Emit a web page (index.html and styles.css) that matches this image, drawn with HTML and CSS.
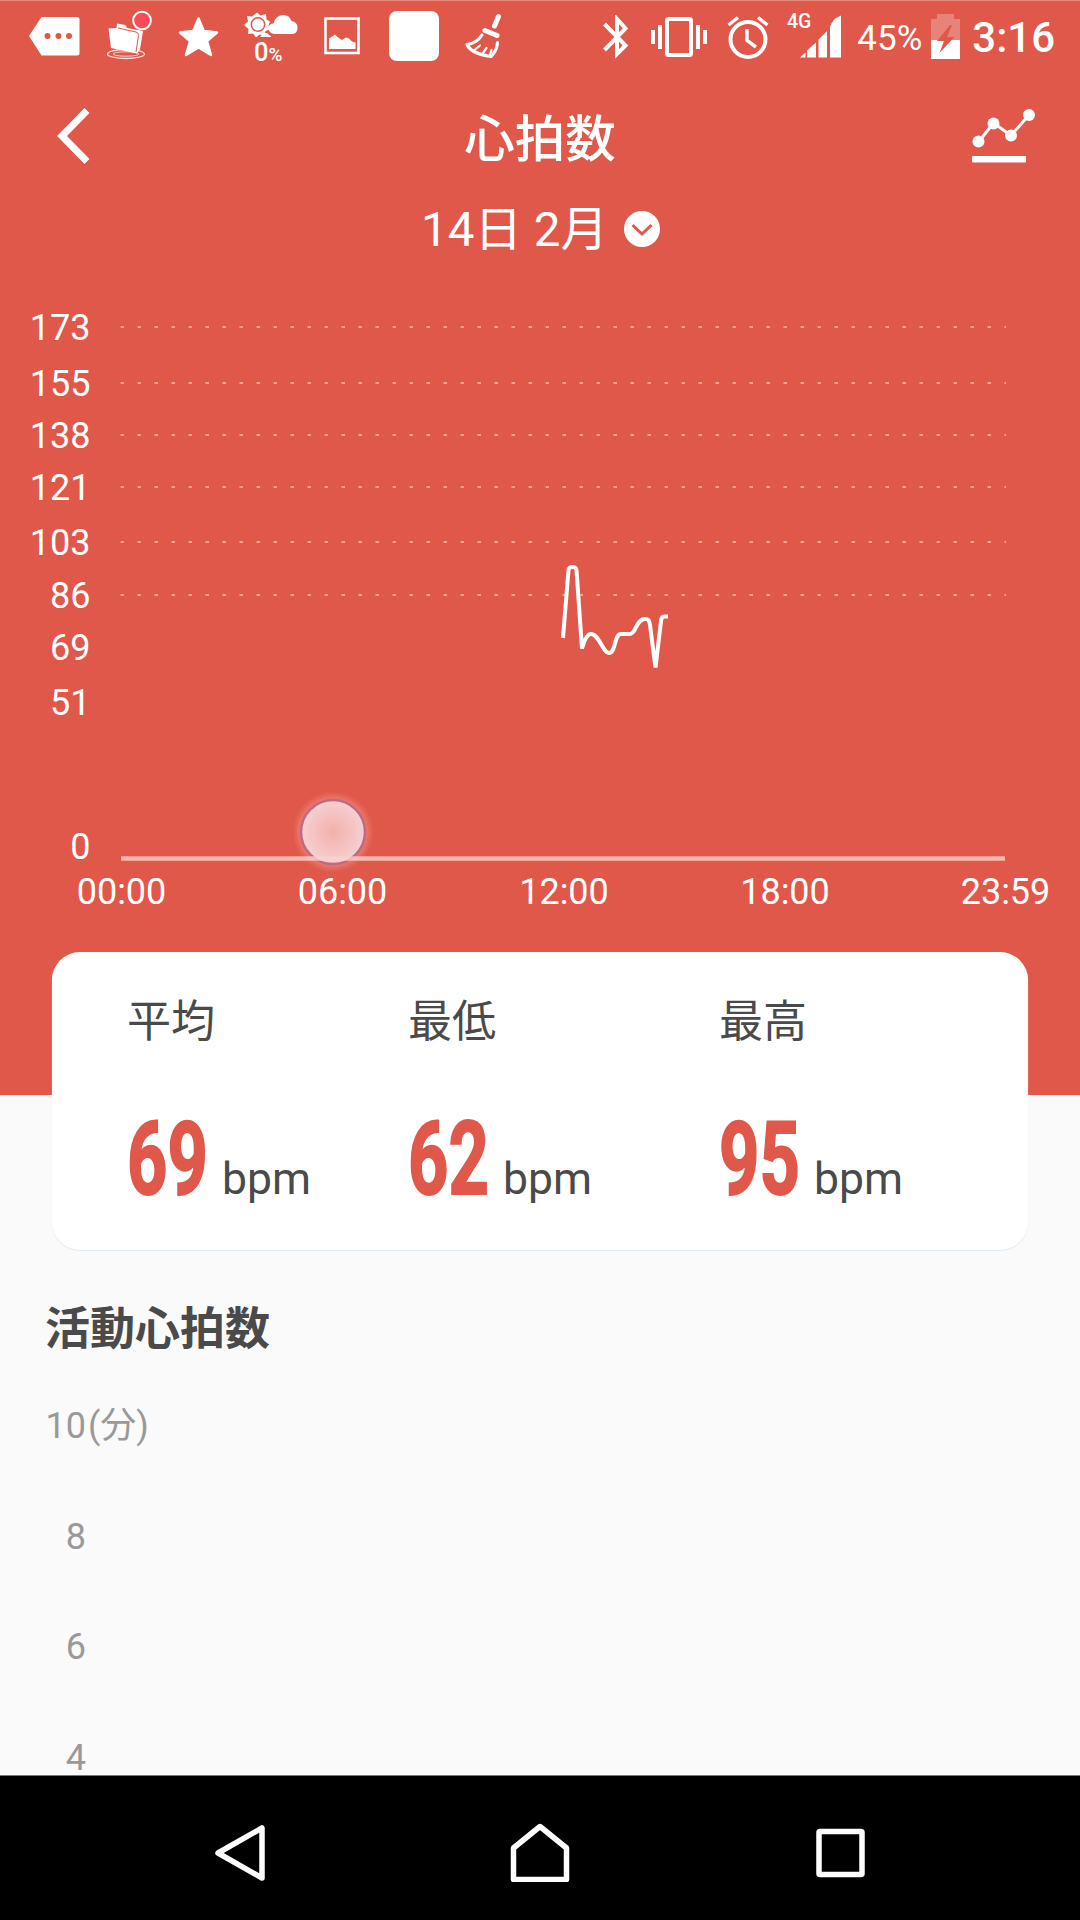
FILE: index.html
```html
<!DOCTYPE html>
<html lang="ja">
<head>
  <meta charset="UTF-8">
  <meta name="viewport" content="width=device-width, initial-scale=1.0">
  <title>心拍数</title>
  <link rel="stylesheet" href="styles.css">
</head>
<body>

<div class="hero">
  <!-- Status bar -->
  <div class="status-bar">
    <div class="notifications">
      <!-- message tag -->
      <svg viewBox="0 0 72 72"><path fill="#fff" d="M23.500 17h35.500q2.500 0 2.500 2.500v33.500q0 2.500-2.500 2.500H23.500L11 36z"/><g fill="#df5849"><circle cx="29.500" cy="36" r="3"/><circle cx="40.500" cy="36" r="3"/><circle cx="51" cy="36" r="3"/></g></svg>
      <!-- folder -->
      <svg viewBox="0 0 72 72"><ellipse cx="36" cy="54" rx="18.500" ry="4.500" fill="none" stroke="#fff" stroke-opacity=".8" stroke-width="1.300"/><ellipse cx="36" cy="54" rx="13" ry="2.200" fill="none" stroke="#fff" stroke-opacity=".7" stroke-width="1"/><path fill="#fff" d="M18.500 28.500l8-.5.500-4.500 8.500 1.500 1.500 3 16 3-3 18.500-3 4L21 48z"/><path fill="none" stroke="#df5849" stroke-width="1" d="M28 28l18 4q3 1 2.500 3.500L46 52"/><circle cx="52" cy="20.500" r="8.800" fill="#f94a55" stroke="#fff" stroke-width="2"/></svg>
      <!-- star -->
      <svg viewBox="0 0 72 72"><path fill="#fff" stroke="#fff" stroke-width="2.500" stroke-linejoin="round" d="M36.500 18.500l5.300 12.500 13.200 1.500-10 8.500 4 14-12.500-7.500-12.500 7.500 4-14-10-8.500 13.200-1.500z"/></svg>
      <!-- weather -->
      <svg viewBox="0 0 72 72"><path fill="#fff" d="M23 12.500l3.500 3 5.500-1.500.5 5.500 3.500 2-1.500 4 1.500 4-4.500 1.500-1 4.500-5-1-3.500 3-3-4-5 .5.500-5-4.500-4 4-3.500-1-5.500 5 .5z"/><circle cx="24" cy="24.500" r="6.700" fill="#fff" stroke="#df5849" stroke-width="1.500"/><path fill="#fff" d="M40 34q-5.500-1-5.500-6 .5-4.500 5-4.500 2-8.500 10-8.500 6 0 8 6 6 1 6 6.500 0 6-5 6.500z"/><path fill="#fff" d="M26 37q3-4.500 7-4l4.500 4z"/><text class="rain" x="20" y="60.500">0<tspan class="rain-unit">%</tspan></text></svg>
      <!-- picture -->
      <svg viewBox="0 0 72 72"><rect x="19.500" y="18.500" width="33" height="34.500" fill="none" stroke="#fff" stroke-width="2.600"/><path fill="#fff" d="M23 49V38.500l4-2.500 2-1.500 2.500 2.500 4.500 3 4-2.500 3 1 3 3 3.500 1V49z"/></svg>
      <!-- blank app -->
      <svg viewBox="0 0 72 72"><rect x="11" y="11" width="50" height="50" rx="8" fill="#fff"/></svg>
      <!-- broom -->
      <svg viewBox="0 0 72 72"><g fill="none" stroke="#fff" stroke-linecap="round" stroke-linejoin="round"><path stroke-width="5" d="M48.500 16.500l-4 9.500"/><path stroke-width="5" d="M35 30.500l12 5"/><path stroke-width="3.200" d="M32 35q-5 8-15 9.500 4 9 24 12 6-6 6.500-14"/><path stroke-width="2.200" d="M25 49.500l5-4M33 53l3.500-5M40 55l1.500-5"/></g></svg>
    </div>
    <div class="system">
      <svg class="bluetooth" viewBox="0 0 26 44"><path fill="none" stroke="#fff" stroke-width="4" d="M1.500 9l21 21.500-8.500 8.500V4l8.500 9.500L1.500 35"/></svg>
      <svg class="vibrate" viewBox="0 0 56 44"><rect x="16" y="4" width="24" height="36" rx="1.500" fill="none" stroke="#fff" stroke-width="4"/><path stroke="#fff" stroke-width="4" d="M2 15v14M9 10v24M47 10v24M54 15v14"/></svg>
      <svg class="alarm" viewBox="0 0 42 44"><circle cx="21" cy="24.500" r="17.500" fill="none" stroke="#fff" stroke-width="4"/><path fill="none" stroke="#fff" stroke-width="3.400" d="M20 14v11.500l9 6.500M1.500 10l9.500-7.500M31 2.500l9.500 7.500"/></svg>
      <svg class="signal" viewBox="0 0 54 46"><text class="network" x="-1" y="13.500">4G</text><path fill="#fff" d="M12 43.500l5.500-5v5zM19 43.500v-7l9-8v15zM30.500 43.500V25.500l8.500-8.500v26.500zM42 43.500V13q2-8 11-11.500v42z"/></svg>
      <span class="percent">45%</span>
      <svg class="battery" viewBox="0 0 29 46"><path fill="#fff" fill-opacity=".26" d="M0 5h6V0h17v5h6v21H0z"/><path fill="#fff" d="M0 26h29v19H0z"/><path fill="#df5849" d="M19 11L6 27h7L8.500 39 23.500 23h-7.500l5-12z"/></svg>
      <span class="clock">3:16</span>
    </div>
  </div>

  <!-- Title bar -->
  <div class="title-bar">
    <svg class="back" viewBox="0 0 36 60"><path fill="none" stroke="#fff" stroke-width="7" d="M33 4.500L8 30 33 55.500"/></svg>
    <div class="title">心拍数</div>
    <svg class="trend" viewBox="0 0 64 56"><path fill="none" stroke="#fff" stroke-width="3" d="M6.500 34l15-19L39 27.500 57 7"/><g fill="#fff"><circle cx="6.500" cy="33.500" r="6"/><circle cx="21.500" cy="15.500" r="6"/><circle cx="39" cy="27.500" r="6"/><circle cx="57" cy="7" r="6"/><rect x="0" y="48" width="54" height="6.500" rx="1"/></g></svg>
  </div>

  <div class="date">
    <span>14日 2月</span>
    <svg class="date-arrow" viewBox="0 0 36 36"><circle cx="18" cy="18" r="18" fill="#fff"/><path fill="none" stroke="#df5849" stroke-width="3" d="M8.500 14l9.500 9 9.500-9"/></svg>
  </div>

  <!-- Heart rate over the day -->
  <svg class="chart" viewBox="0 280 1080 660">
    <defs>
      <radialGradient id="touch">
        <stop offset="0" stop-color="#f3b0aa"/>
        <stop offset="1" stop-color="#f5d0d2"/>
      </radialGradient>
      <radialGradient id="glow">
        <stop offset=".74" stop-color="#f58a85" stop-opacity=".9"/>
        <stop offset="1" stop-color="#f07a70" stop-opacity="0"/>
      </radialGradient>
    </defs>
    <g class="y-labels">
      <text x="90.500" y="339.500">173</text>
      <text x="90.500" y="395.500">155</text>
      <text x="90.500" y="447.500">138</text>
      <text x="90.500" y="499.500">121</text>
      <text x="90.500" y="554.500">103</text>
      <text x="90.500" y="607.500">86</text>
      <text x="90.500" y="659.500">69</text>
      <text x="90.500" y="714.500">51</text>
      <text x="90.500" y="858.500">0</text>
    </g>
    <path class="grid" d="M120.500 327H1006M120.500 383H1006M120.500 435H1006M120.500 487H1006M120.500 542H1006M120.500 595H1006"/>
    <path class="line" d="M563 638L568.500 570Q569 567 572.500 567T576.500 570L582 648.500Q586 634 591 634C599 634 603 653 609 653C616 653 614 634 621 634H630C636 634 636 619 645 619C649 619 649 620 650 625L655.500 667.500 661 621Q661.500 616.500 664 616.500H668"/>
    <circle cx="333" cy="832" r="41" fill="url(#glow)"/>
    <circle cx="333" cy="832" r="32" fill="url(#touch)" stroke="#bd6a83" stroke-width="2.500"/>
    <path class="axis" d="M121 858.500h884"/>
    <g class="x-labels">
      <text x="121.500" y="904">00:00</text>
      <text x="342.500" y="904">06:00</text>
      <text x="564" y="904">12:00</text>
      <text x="785" y="904">18:00</text>
      <text x="1005.500" y="904">23:59</text>
    </g>
  </svg>
</div>

<!-- Summary -->
<div class="card">
  <div class="stat">
    <div class="stat-label">平均</div>
    <div class="stat-value"><span class="number">69</span><span class="unit">bpm</span></div>
  </div>
  <div class="stat">
    <div class="stat-label">最低</div>
    <div class="stat-value"><span class="number">62</span><span class="unit">bpm</span></div>
  </div>
  <div class="stat">
    <div class="stat-label">最高</div>
    <div class="stat-value"><span class="number">95</span><span class="unit">bpm</span></div>
  </div>
</div>

<!-- Active heart rate, continues below the navigation bar -->
<div class="activity">
  <div class="activity-title">活動心拍数</div>
  <div class="minutes">
    <div class="minute"><span>10</span>(分)</div>
    <div class="minute"><span>8</span></div>
    <div class="minute"><span>6</span></div>
    <div class="minute"><span>4</span></div>
  </div>
</div>

<div class="nav-bar">
  <svg viewBox="0 0 60 60"><path d="M52 6v50L8 31z"/></svg>
  <svg viewBox="0 0 60 60"><path d="M3.500 57.500V26L30 4.500 56.500 26v31.500z"/></svg>
  <svg viewBox="0 0 60 60"><rect x="9" y="9.500" width="43" height="43" rx="1"/></svg>
</div>

</body>
</html>
```
FILE: styles.css
```css
* {
  box-sizing: border-box;
}

body {
  margin: 0;
  width: 1080px;
  height: 1920px;
  display: flex;
  flex-direction: column;
  overflow: hidden;
  font-family: Roboto, "Noto Sans CJK JP", sans-serif;
  background-color: #fafafa;
}

svg {
  display: block;
  flex: none;
}

.hero {
  flex: none;
  height: 1095px;
  background-color: #df5849;
  color: white;
  border-top: 1px solid #e88a80;
}

/* Status bar */
.status-bar {
  height: 79px;
  display: flex;
  justify-content: space-between;
  padding: 0 25px 0 18px;
  margin-top: -1px;
}

.notifications {
  display: flex;
}

.notifications svg {
  width: 72px;
  height: 72px;
}

.rain {
  font-size: 25.5px;
  font-weight: 500;
  fill: white;
}

.rain-unit {
  font-size: 19px;
}

.system {
  display: flex;
  align-items: center;
  height: 74px;
}

.bluetooth {
  width: 26px;
  height: 44px;
}

.vibrate {
  width: 56px;
  height: 44px;
  margin-left: 22px;
}

.alarm {
  width: 42px;
  height: 44px;
  margin-left: 20px;
}

.signal {
  width: 54px;
  height: 46px;
  margin-left: 19px;
  overflow: visible;
}

.network {
  font-size: 19.5px;
  font-weight: 500;
  fill: white;
}

.percent {
  margin-left: 15px;
  padding-top: 3px;
  font-size: 35px;
  line-height: 40px;
}

.battery {
  width: 29px;
  height: 46px;
  margin-left: 9px;
}

.clock {
  margin-left: 12px;
  padding-top: 2px;
  font-size: 42px;
  font-weight: 500;
  line-height: 46px;
}

/* Title bar */
.title-bar {
  display: grid;
  grid-template-columns: 1fr auto 1fr;
  align-items: center;
  height: 114px;
  padding: 0 44px 0 54px;
}

.back {
  width: 36px;
  height: 60px;
}

.title {
  padding: 8px 10px 0 0;
  font-size: 50.5px;
  font-weight: 500;
  line-height: 70px;
}

.trend {
  width: 64px;
  height: 56px;
  justify-self: end;
}

.date {
  display: flex;
  align-items: center;
  justify-content: center;
  gap: 16px;
  height: 74px;
  padding-left: 1px;
  font-size: 47.5px;
  line-height: 70px;
}

.date-arrow {
  width: 36px;
  height: 36px;
  margin-top: -2px;
}

/* Chart */
.chart {
  width: 1080px;
  height: 660px;
  margin-top: 13px;
  font-size: 36px;
}

.y-labels {
  fill: white;
  text-anchor: end;
}

.x-labels {
  fill: white;
  text-anchor: middle;
}

.grid {
  stroke: #f2a198;
  stroke-width: 2;
  stroke-dasharray: 3.5 13.5;
}

.line {
  fill: none;
  stroke: white;
  stroke-width: 4;
}

.axis {
  stroke: #fcd0ca;
  stroke-opacity: .8;
  stroke-width: 4.5;
}

/* Summary card */
.card {
  position: relative; /* keeps the card above the red area */
  flex: none;
  display: grid;
  grid-template-columns: 281px 311px 1fr;
  width: 976px;
  height: 298px;
  margin: -143px 0 1px 52px;
  padding: 42px 0 0 75px;
  border-radius: 28px;
  background-color: white;
  box-shadow: 0 1px 1px #dfe9f2;
}

.stat-label {
  font-size: 44px;
  line-height: 56px;
  color: #4a4a4a;
}

.stat-value {
  display: flex;
  align-items: baseline;
  margin-top: 47px;
  line-height: 124px;
}

.number {
  width: 95px;
  font-size: 102px;
  font-weight: 700;
  color: #df5849;
  -webkit-text-stroke: 2px #df5849;
  transform: scaleX(.69);
  transform-origin: left;
}

.unit {
  font-size: 44.5px;
  color: #4a4a4a;
}

/* Activity */
.activity {
  flex: 1;
  min-height: 0;
  padding: 47px 0 0 45px;
}

.activity-title {
  font-size: 45px;
  font-weight: 700;
  line-height: 64px;
  color: #4a4a4a;
}

.minutes {
  margin-top: 37px;
  color: #999;
  font-size: 36px;
}

.minute {
  height: 110.5px;
  line-height: 54px;
}

.minute span {
  display: inline-block;
  width: 41px;
  margin-right: 2px;
  text-align: right;
}

/* Navigation bar */
.nav-bar {
  position: relative; /* stays over the scrolled content */
  flex: none;
  display: flex;
  align-items: center;
  justify-content: space-between;
  height: 145px;
  padding: 8px 210px 0;
  background-color: black;
  border-top: 1px solid #777;
}

.nav-bar svg {
  width: 60px;
  height: 60px;
  fill: none;
  stroke: white;
  stroke-width: 5.5;
  stroke-linejoin: round;
}
```
